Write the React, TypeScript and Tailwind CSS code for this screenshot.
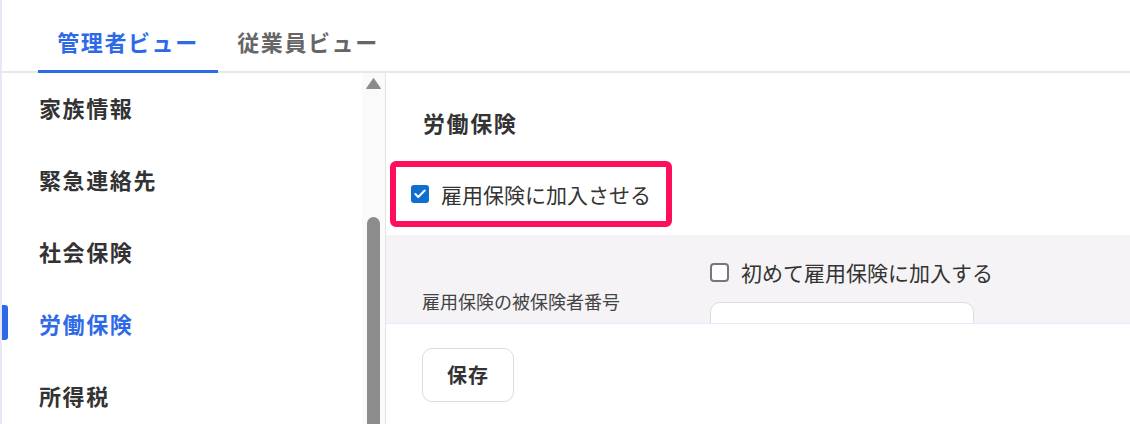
import { Check } from "lucide-react";

const navItems = ["家族情報", "緊急連絡先", "社会保険", "労働保険", "所得税"];
const activeItem = "労働保険";

const font = "font-['Noto_Sans_CJK_JP','Noto_Sans',sans-serif]";

function Tab({ label, active }: { label: string; active?: boolean }) {
    return (
        <div
            className={
                "w-[180px] h-[43px] -mb-[2px] flex items-start justify-center text-[22px] leading-[22px] font-bold tracking-[1.6px] " +
                (active ? "text-[#2e6ae8] border-b-[3px] border-[#2e6ae8]" : "text-[#666666]")
            }
        >
            {label}
        </div>
    );
}

function Scrollbar() {
    return (
        <div className="w-[24px] bg-[#fafafa] border-r border-[#e4e4e4] flex flex-col items-center -mt-[2px]">
            <svg width="15" height="11" viewBox="0 0 15 11" className="mt-[7px] shrink-0">
                <path d="M7.5 0.5 L14.5 10.5 L0.5 10.5 Z" fill="#8a8a8a" strokeLinejoin="round" stroke="#8a8a8a" />
            </svg>
            <div className="mt-[128px] w-[13px] flex-1 rounded-t-full bg-[#8c8c8c]" />
        </div>
    );
}

function CheckBox({ checked }: { checked?: boolean }) {
    if (checked) {
        return (
            <span className="w-[18px] h-[18px] shrink-0 rounded-[3px] bg-[#0f6fd1] flex items-center justify-center">
                <Check size={14} strokeWidth={3.5} color="#ffffff" />
            </span>
        );
    }
    return <span className="block w-[19px] h-[19px] shrink-0 rounded-[4px] border-2 border-[#777777] bg-white" />;
}

export default function App() {
    return (
        <div className={`w-[1130px] h-[424px] overflow-hidden bg-white border-l-2 border-[#e6e8f6] ${font}`}>
            <header className="h-[73px] flex items-end pl-[36px] border-b-2 border-[#e8e8e8]">
                <Tab label="管理者ビュー" active />
                <Tab label="従業員ビュー" />
            </header>

            <div className="flex h-[351px] overflow-hidden">
                <aside className="flex">
                    <nav className="w-[360px] flex flex-col -mt-[2px]">
                        {navItems.map((item) => {
                            const active = item === activeItem;
                            return (
                                <div key={item} className="relative h-[72px] shrink-0 flex items-center pl-[37px]">
                                    {active && (
                                        <span className="absolute left-0 top-[18px] w-[6px] h-[35px] rounded-r-[3px] bg-[#2e6ae8]" />
                                    )}
                                    <span
                                        className={
                                            "text-[22px] leading-[30px] font-bold tracking-[1.6px] " +
                                            (active ? "text-[#2e6ae8]" : "text-[#333333]")
                                        }
                                    >
                                        {item}
                                    </span>
                                </div>
                            );
                        })}
                    </nav>
                    <Scrollbar />
                </aside>

                <main className="flex-1 flex flex-col">
                    <h2 className="pt-[34px] pl-[37px] text-[22px] leading-[30px] font-bold tracking-[1.6px] text-[#333333]">
                        労働保険
                    </h2>

                    <div className="mt-[24px] ml-[4px] w-[282px] h-[66px] shrink-0 rounded-[6px] border-[6px] border-[#ff0f5b] flex items-center gap-[12px] pl-[15px]">
                        <CheckBox checked />
                        <span className="text-[21px] leading-[28px] text-[#333333]">雇用保険に加入させる</span>
                    </div>

                    <section className="mt-[8px] h-[89px] shrink-0 overflow-hidden bg-[#f5f3f5] border-b border-[#e4ebfa] flex">
                        <div className="w-[324px] pl-[36px] pt-[53px] text-[18px] leading-[26px] text-[#444444]">
                            雇用保険の被保険者番号
                        </div>
                        <div className="pt-[27px] flex flex-col">
                            <label className="h-[20px] flex items-center gap-[12px]">
                                <CheckBox />
                                <span className="text-[21px] leading-[28px] text-[#333333]">初めて雇用保険に加入する</span>
                            </label>
                            <div className="mt-[20px] w-[264px] h-[44px] shrink-0 rounded-[10px] border border-[#dcdcdc] bg-white" />
                        </div>
                    </section>

                    <div className="pt-[24px] pl-[36px]">
                        <button className="w-[92px] h-[54px] rounded-[10px] border border-[#dcdcdc] bg-white text-[20px] font-bold tracking-[1px] text-[#333333]">
                            保存
                        </button>
                    </div>
                </main>
            </div>
        </div>
    );
}
